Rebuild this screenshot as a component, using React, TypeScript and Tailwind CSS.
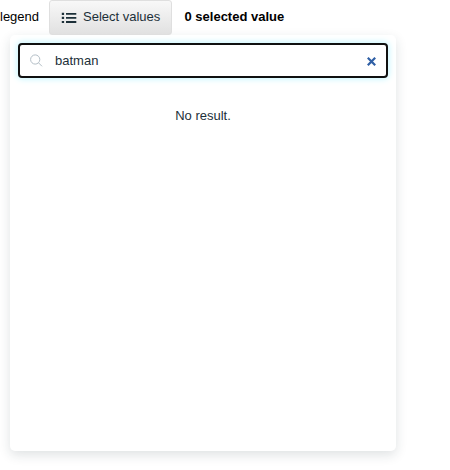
function ListIcon() {
  return (
    <svg width="16" height="12" viewBox="0 0 16 12" fill="#1c3039" className="mt-[3px] shrink-0">
      <path d="M.8 .7h2.3v2.2H.8zM.8 4.8h2.3v2.2H.8zM.8 8.9h2.3v2.2H.8zM5 1h10.3v1.8H5zM5 5h10.3v1.8H5zM5 9.1h10.3v1.8H5z" />
    </svg>
  );
}

export default function App() {
  return (
    <div className="h-[470px] w-[450px] overflow-hidden bg-white font-['Liberation_Sans',Arial,sans-serif] text-[13px] leading-[16px] text-black">
      <div className="flex h-[35px] items-start">
        <span className="w-[49px] pt-[9px]">legend</span>
        <button className="flex h-[35px] w-[123px] items-start rounded-[3px] border border-[#dfdfdf] bg-linear-to-b from-[#f8f8f8] to-[#e1e1e1] pt-[8px] pl-[11px] text-[#1c3039]">
          <ListIcon />
          <span className="ml-[6px] whitespace-nowrap">Select values</span>
        </button>
        <span className="pt-[9px] pl-[12.5px] font-bold whitespace-nowrap">0 selected value</span>
      </div>
      <div className="ml-[10px] h-[416px] w-[386px] rounded-[5px] bg-white px-2 pt-2 text-[#1c3039] shadow-[0_4px_12px_rgba(28,48,57,0.14)]">
        <div className="flex h-[35px] w-[370px] items-center rounded-[4px] border-2 border-[#101010] bg-white pr-[10px] pl-[10px] shadow-[0_0_6px_1px_#c4f6ff]">
          <svg width="13" height="13" viewBox="0 0 13 13" fill="none" stroke="#b3bec6" strokeWidth="1" className="shrink-0">
            <circle cx="5.2" cy="5.5" r="4.6" />
            <path d="M8.6 8.9l3.4 3.4" />
          </svg>
          <span className="ml-[12px] grow">batman</span>
          <svg width="9" height="9" viewBox="0 0 9 9" fill="none" stroke="#2f5fa5" strokeWidth="2.2" className="mt-px shrink-0">
            <path d="M.8 .8l7.4 7.4M8.2 .8L.8 8.2" />
          </svg>
        </div>
        <p className="mt-[30px] text-center">No result.</p>
      </div>
    </div>
  );
}
